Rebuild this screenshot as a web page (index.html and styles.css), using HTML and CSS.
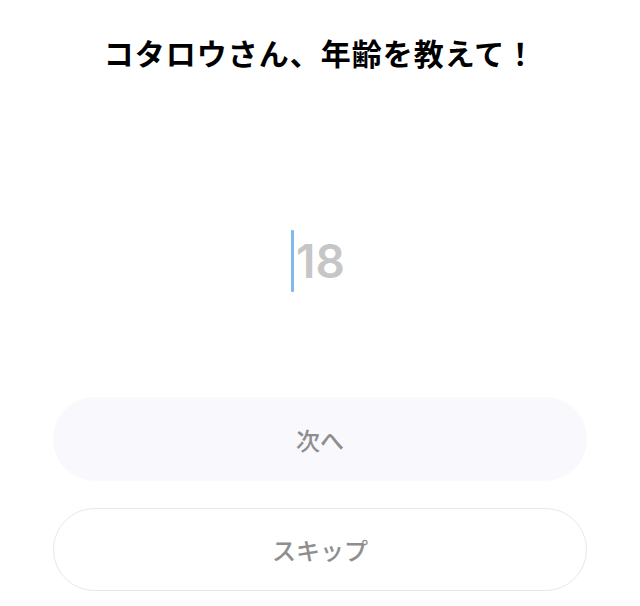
FILE: index.html
```html
<!DOCTYPE html>
<html lang="ja">
<head>
<meta charset="utf-8">
<link rel="stylesheet" href="styles.css">
</head>
<body>
<main class="screen">
  <h1 class="title">コタロウさん、年齢を教えて！</h1>
  <div class="field">
    <span class="caret"></span><span class="placeholder">18</span>
  </div>
  <div class="actions">
    <button class="btn btn-primary">次へ</button>
    <button class="btn btn-outline">スキップ</button>
  </div>
</main>
</body>
</html>
```
FILE: styles.css
```css
html, body {
  margin: 0;
  padding: 0;
  background: #ffffff;
}
body {
  font-family: "Noto Sans CJK JP", "Noto Sans", sans-serif;
  width: 640px;
  height: 606px;
  overflow: hidden;
}
.screen {
  display: flex;
  flex-direction: column;
  align-items: center;
}
.title {
  margin: 30px 0 0;
  font-size: 30px;
  font-weight: 700;
  line-height: 44px;
  letter-spacing: 1px;
  color: #000;
}
.field {
  margin-top: 156px;
  height: 62px;
  display: flex;
  align-items: center;
  padding-right: 4px;
}
.caret {
  width: 3px;
  height: 62px;
  background: #7fb9ee;
  border-radius: 1px;
}
.placeholder {
  font-family: Inter, Roboto, "Liberation Sans", Arial, sans-serif;
  font-weight: 600;
  font-size: 46px;
  color: #c6c6c6;
  margin-left: 2px;
}
.actions {
  margin-top: 105px;
  width: 534px;
  display: flex;
  flex-direction: column;
  gap: 27px;
}
.btn {
  height: 84px;
  border-radius: 42px;
  font-family: "Noto Sans CJK JP", "Noto Sans", sans-serif;
  font-size: 24px;
  font-weight: 500;
  color: #8e8e8e;
  padding: 0;
  margin: 0;
}
.btn-primary {
  background: #f8f8fd;
  border: none;
}
.btn-outline {
  background: #ffffff;
  border: 1.5px solid #e8e8e8;
  height: 83px;
}
```
